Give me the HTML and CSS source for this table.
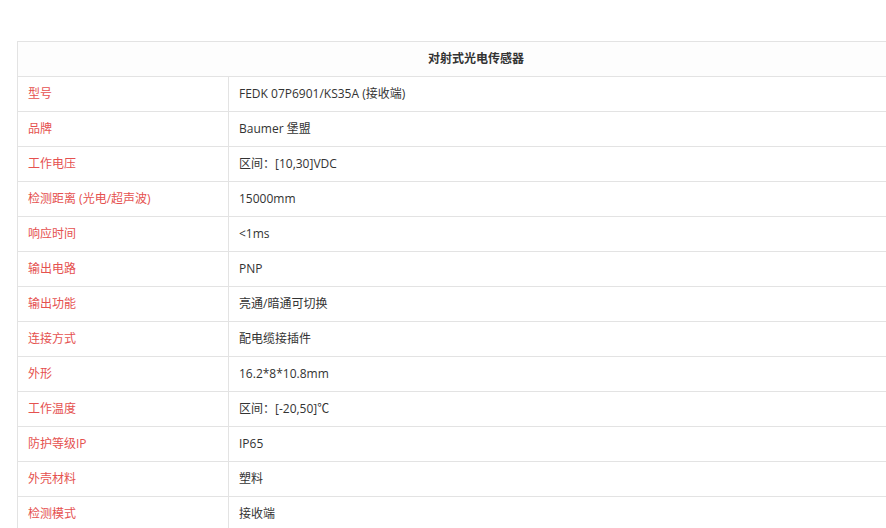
FILE: index.html
```html
<!DOCTYPE html>
<html lang="zh">
<head>
<meta charset="utf-8">
<link rel="stylesheet" href="styles.css">
</head>
<body>
<div class="page">
<table class="spec">
<colgroup><col class="c1"><col class="c2"></colgroup>
<thead>
<tr><th colspan="2">对射式光电传感器</th></tr>
</thead>
<tbody>
<tr><td class="k">型号</td><td>FEDK 07P6901/KS35A (接收端)</td></tr>
<tr><td class="k">品牌</td><td>Baumer 堡盟</td></tr>
<tr><td class="k">工作电压</td><td>区间：[10,30]VDC</td></tr>
<tr><td class="k">检测距离 (光电/超声波)</td><td>15000mm</td></tr>
<tr><td class="k">响应时间</td><td>&lt;1ms</td></tr>
<tr><td class="k">输出电路</td><td>PNP</td></tr>
<tr><td class="k">输出功能</td><td>亮通/暗通可切换</td></tr>
<tr><td class="k">连接方式</td><td>配电缆接插件</td></tr>
<tr><td class="k">外形</td><td>16.2*8*10.8mm</td></tr>
<tr><td class="k">工作温度</td><td>区间：[-20,50]℃</td></tr>
<tr><td class="k">防护等级IP</td><td>IP65</td></tr>
<tr><td class="k">外壳材料</td><td>塑料</td></tr>
<tr><td class="k">检测模式</td><td>接收端</td></tr>
</tbody>
</table>
</div>
</body>
</html>
```
FILE: styles.css
```css
html, body {
  margin: 0;
  padding: 0;
  background: #fff;
  overflow: hidden;
}
.page {
  padding: 41px 0 0 17px;
  width: 886px;
  height: 528px;
  box-sizing: border-box;
  overflow: hidden;
  font-family: "Open Sans", "Noto Sans CJK SC", sans-serif;
  font-size: 12px;
  color: #333;
}
.spec {
  width: 918px;
  border-collapse: collapse;
  table-layout: fixed;
}
.spec .c1 { width: 211px; }
.spec th, .spec td {
  border: 1px solid #e3e3e3;
  height: 35px;
  padding: 0 0 0 10px;
  text-align: left;
  line-height: 16px;
  box-sizing: border-box;
}
.spec th {
  text-align: center;
  font-weight: bold;
  color: #333;
  background: #fdfdfd;
  padding: 0;
}
.spec td.k {
  color: #e5514f;
}
```
